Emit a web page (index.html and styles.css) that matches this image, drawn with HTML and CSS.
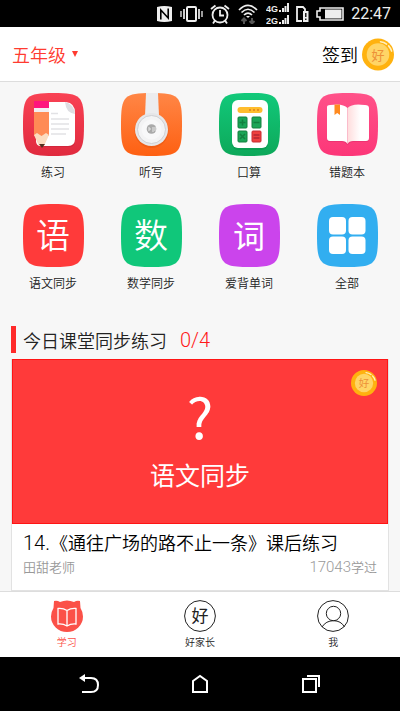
FILE: index.html
```html
<!DOCTYPE html>
<html lang="zh-CN">
<head>
    <meta charset="UTF-8">
    <meta name="viewport" content="width=device-width, initial-scale=1.0">
    <title>学习</title>
    <link rel="stylesheet" href="styles.css">
</head>
<body>
    <svg width="0" height="0" class="defs" aria-hidden="true">
        <defs>
            <linearGradient id="red" x1="0" y1="0" x2="0" y2="1"><stop offset="0" stop-color="#f94254"/><stop offset="1" stop-color="#e02a3e"/></linearGradient>
            <linearGradient id="orange" x1="0" y1="0" x2="0" y2="1"><stop offset="0" stop-color="#ff8646"/><stop offset="1" stop-color="#fe6012"/></linearGradient>
            <linearGradient id="green" x1="0" y1="0" x2="0" y2="1"><stop offset="0" stop-color="#12c97a"/><stop offset="1" stop-color="#0da85a"/></linearGradient>
            <linearGradient id="pink" x1="0" y1="0" x2="0" y2="1"><stop offset="0" stop-color="#ff5289"/><stop offset="1" stop-color="#fc3678"/></linearGradient>
            <linearGradient id="page" x1="0" y1="0" x2="1" y2="0"><stop offset="0" stop-color="#ffdcdc"/><stop offset="0.6" stop-color="#fff"/></linearGradient>
            <path id="tile" d="M0 31.5C0 3 3 0 30.5 0S61 3 61 31.5S58 63 30.5 63S0 60 0 31.5Z"/>
            <symbol id="coin" viewBox="0 0 32 32">
                <circle cx="16" cy="16" r="16" fill="#ffb20f"/>
                <circle cx="16" cy="16" r="11.3" fill="#ffd566"/>
                <path d="M18.5 3.2Q22 3.6 24.6 5.6M26.6 7.4Q28.6 9.6 29.6 12.6" fill="none" stroke="#fff0c0" stroke-width="1.6" stroke-linecap="round"/>
                <text x="16" y="21" text-anchor="middle" class="coin-text">好</text>
            </symbol>
        </defs>
    </svg>

    <div class="status-bar">
        <svg width="17" height="18" viewBox="0 0 17 18">
            <path d="M1 2Q8 0 16 2V16Q8 18 1 16Z" fill="#eee"/>
            <path d="M4.800 14.500V5L12.200 13V3.500" fill="none" stroke="#000" stroke-width="1.600"/>
        </svg>
        <svg width="23" height="18" viewBox="0 0 23 18" fill="none" stroke="#eee">
            <rect x="7" y="2" width="9" height="14" rx="1" stroke-width="2"/>
            <path d="M4 4V14M19 4V14" stroke-width="1.700"/>
            <path d="M1 6V12M22 6V12" stroke-width="1.300"/>
        </svg>
        <svg width="20" height="20" viewBox="0 0 20 20" fill="none" stroke="#eee" stroke-width="1.800">
            <circle cx="10" cy="11" r="7.500"/>
            <path d="M10 6V11.500H14M1 5L5.500 1.500M19 5L14.500 1.500M5 16.500L3 19.500M15 16.500L17 19.500"/>
        </svg>
        <svg width="22" height="20" viewBox="0 0 22 20" fill="none" stroke="#eee" stroke-width="1.700">
            <path d="M2 6Q11 -3 20 6M4.500 8.500Q11 2 17.500 8.500M7 11Q11 7 15 11"/>
            <path d="M9 12H13L11 14Z" fill="#eee" stroke="none"/>
            <path d="M7 20V14.500M4.500 17L7 14.500L9.500 17M15 14V19.500M12.500 17L15 19.500L17.500 17" stroke="#555" stroke-width="2"/>
        </svg>
        <svg width="23" height="22" viewBox="0 0 23 22" fill="#eee">
            <text x="0" y="9" class="signal-text">4G</text>
            <text x="0" y="21" class="signal-text">2G</text>
            <path d="M13 7h2v2h-2zM16 5h2v4h-2zM18.500 3h2v6h-2zM21 0h2v9h-2zM13 19h2v2h-2zM16 17h2v4h-2zM18.500 15h2v6h-2zM21 12h2v9h-2z"/>
        </svg>
        <svg width="13" height="18" viewBox="0 0 13 18">
            <path d="M6 16H1V2H7L9 4V6" fill="none" stroke="#eee" stroke-width="1.800"/>
            <path d="M7 6H12.500V17H7Z" fill="#eee"/>
            <path d="M9.800 8V12M9.800 13.500V15" stroke="#000" stroke-width="1.300"/>
        </svg>
        <svg width="28" height="14" viewBox="0 0 28 14">
            <path d="M4 1H27V13H4V10H1V4H4Z" fill="none" stroke="#eee" stroke-width="1.600"/>
            <path d="M9 2.500H25.500V11.500H9Z" fill="#eee"/>
        </svg>
        <span class="clock">22:47</span>
    </div>

    <header class="header">
        <button class="grade">五年级
            <svg width="6" height="6" viewBox="0 0 6 6"><path d="M0 0H6L3 6Z" fill="#ff3b30"/></svg>
        </button>
        <button class="sign">签到
            <svg width="32" height="33"><use href="#coin"/></svg>
        </button>
    </header>

    <main class="main">
        <nav class="grid">
            <a href="#" class="item">
                <svg width="61" height="63" viewBox="0 0 61 63">
                    <use href="#tile" fill="url(#red)"/>
                    <path d="M15 12H46Q52 13 52 19V48Q52 54 46 54H19L15 50Z" fill="#b91d35" opacity="0.4"/>
                    <path d="M13 9H43Q52 10 52 20V46Q52 53 45 53H18Q13 53 13 48Z" fill="#fff"/>
                    <path d="M42 9Q43 20 52 21Q51 11 42 9Z" fill="#dedee2"/>
                    <path d="M28 20.500H35M28 26H46M28 31H46M28 36H46M28 41H43" stroke="#e2e2e5" stroke-width="1.500"/>
                    <path d="M11 8H26V15H11Z" fill="#ff147d"/>
                    <path d="M11 15H26V19H11Z" fill="#f2eef2"/>
                    <path d="M11 19H26V43H11Z" fill="#ff8b55"/>
                    <path d="M11 42L14 40L18.500 43L23 40L26 42L21 53H16Z" fill="#fbdcc0"/>
                    <path d="M16 51H22L19 55Z" fill="#553020"/>
                </svg>
                <span>练习</span>
            </a>
            <a href="#" class="item">
                <svg width="61" height="63" viewBox="0 0 61 63">
                    <use href="#tile" fill="url(#orange)"/>
                    <circle cx="30.500" cy="38" r="17" fill="#d94c0a" opacity="0.35"/>
                    <path d="M25 0H37L38 23H24Z" fill="#ececee"/>
                    <circle cx="30.500" cy="36.500" r="16.500" fill="#e6e6e8"/>
                    <circle cx="30.500" cy="36.500" r="14" fill="#f3f3f4" stroke="#cfcfd2"/>
                    <circle cx="30.500" cy="36.500" r="10" fill="#f8f8f9"/>
                    <circle cx="30.500" cy="36" r="4.800" fill="#aaa"/>
                    <path d="M28 34V38M28 36H30M32 34V39M34 34V38" stroke="#e8e8e8"/>
                </svg>
                <span>听写</span>
            </a>
            <a href="#" class="item">
                <svg width="61" height="63" viewBox="0 0 61 63">
                    <use href="#tile" fill="url(#green)"/>
                    <rect x="13" y="9" width="36" height="48" rx="6" fill="#078c45" opacity="0.4"/>
                    <rect x="13" y="7" width="36" height="48" rx="6" fill="#fff"/>
                    <rect x="18.500" y="14" width="25" height="6" rx="3" fill="#ffbd2e"/>
                    <path d="M30 17h2M34 17h2M38 17h2" stroke="#e88d20" stroke-width="2"/>
                    <g stroke="#12803f">
                        <rect x="19" y="24" width="9" height="11" rx="1" fill="#1ba557"/>
                        <rect x="33" y="24" width="9" height="11" rx="1" fill="#1ba557"/>
                        <rect x="19" y="38" width="9" height="11" rx="1" fill="#1ba557"/>
                        <path d="M20.500 29.500H26.500M23.500 26.500V32.500M34.500 29.500H40.500M21 41L26 46M26 41L21 46" stroke-width="1.600"/>
                    </g>
                    <rect x="33" y="38" width="9" height="11" rx="1" fill="#ee403e" stroke="#c62b30"/>
                    <path d="M34.500 42H40.500M34.500 45H40.500" stroke="#b32630" stroke-width="1.400"/>
                </svg>
                <span>口算</span>
            </a>
            <a href="#" class="item">
                <svg width="61" height="63" viewBox="0 0 61 63">
                    <use href="#tile" fill="url(#pink)"/>
                    <path d="M10 15Q10 13 13 12Q25 10 30.500 15Q36 10 49 12Q52 13 52 15V47Q52 49 49 49H36Q33 49 30.500 52Q28 49 25 49H13Q10 49 10 47Z" fill="#c91f5c" opacity="0.3"/>
                    <path d="M10 14Q10 12 13 12Q26 10 30.500 15V51Q29 48 25 48H13Q10 48 10 45Z" fill="#fff"/>
                    <path d="M30.500 15Q35 10 48 12Q52 12 52 15V45Q52 48 49 48H36Q32 48 30.500 51Z" fill="url(#page)"/>
                    <path d="M17.500 11.500H23V22L20.200 20L17.500 22Z" fill="#ff8a1f"/>
                </svg>
                <span>错题本</span>
            </a>
            <a href="#" class="item">
                <svg width="61" height="63" viewBox="0 0 61 63">
                    <use href="#tile" fill="#ff3a3a"/>
                    <text x="30" y="44" text-anchor="middle" class="tile-text">语</text>
                </svg>
                <span>语文同步</span>
            </a>
            <a href="#" class="item">
                <svg width="61" height="63" viewBox="0 0 61 63">
                    <use href="#tile" fill="#10c77a"/>
                    <text x="30" y="44" text-anchor="middle" class="tile-text">数</text>
                </svg>
                <span>数学同步</span>
            </a>
            <a href="#" class="item">
                <svg width="61" height="63" viewBox="0 0 61 63">
                    <use href="#tile" fill="#cb44ec"/>
                    <text x="30" y="44" text-anchor="middle" class="tile-text word">词</text>
                </svg>
                <span>爱背单词</span>
            </a>
            <a href="#" class="item">
                <svg width="61" height="63" viewBox="0 0 61 63">
                    <use href="#tile" fill="#32aef0"/>
                    <g fill="#fff">
                        <rect x="12" y="13" width="17" height="17.500" rx="4"/>
                        <rect x="31.500" y="13" width="17" height="17.500" rx="4"/>
                        <rect x="12" y="32.500" width="17" height="17.500" rx="4"/>
                        <rect x="31.500" y="32.500" width="17" height="17.500" rx="4"/>
                    </g>
                </svg>
                <span>全部</span>
            </a>
        </nav>

        <h2 class="section-title">今日课堂同步练习 <span class="count">0/4</span></h2>

        <a href="#" class="card">
            <div class="cover">
                <svg class="badge" width="26" height="26"><use href="#coin"/></svg>
                <span class="mark">?</span>
                <span class="subject">语文同步</span>
            </div>
            <div class="card-body">
                <h3><span class="title-num">14.</span>《通往广场的路不止一条》课后练习</h3>
                <p class="meta"><span>田甜老师</span><span><span class="meta-num">17043</span>学过</span></p>
            </div>
        </a>
    </main>

    <nav class="tab-bar">
        <a href="#" class="tab active">
            <svg width="32" height="32" viewBox="0 0 32 32">
                <path d="M3 1Q6 0 9 2Q16 -1 23 2Q26 0 29 1L29.500 8Q32 12 32 16.500A16 15.500 0 0 1 0 16.500Q0 12 2.500 8Z" fill="#fb5148"/>
                <path d="M16 10.500Q12 8 7 8.500V24Q12 23.500 16 26Q20 23.500 25 24V8.500Q20 8 16 10.500V26" fill="none" stroke="#fff" stroke-width="1.300"/>
            </svg>
            <span>学习</span>
        </a>
        <a href="#" class="tab">
            <svg width="32" height="32" viewBox="0 0 32 32">
                <circle cx="16" cy="16" r="15.400" fill="none" stroke="#222"/>
                <text x="16" y="22" text-anchor="middle" class="tab-text">好</text>
            </svg>
            <span>好家长</span>
        </a>
        <a href="#" class="tab">
            <svg width="32" height="32" viewBox="0 0 32 32" fill="none" stroke="#222">
                <circle cx="16" cy="16" r="15.400"/>
                <circle cx="16.500" cy="13.500" r="7.200"/>
                <path d="M5 27Q9 20.700 16.500 20.700T27.500 27"/>
            </svg>
            <span>我</span>
        </a>
    </nav>

    <div class="system-nav">
        <button aria-label="返回">
            <svg width="20" height="20" viewBox="0 0 20 20" fill="none" stroke="#fff" stroke-width="2">
                <path d="M4 4H12Q19 4 19 11T12 18H3"/>
                <path d="M0 4L6 0V8Z" fill="#fff" stroke="none"/>
            </svg>
        </button>
        <button aria-label="主页">
            <svg width="18" height="20" viewBox="0 0 18 20" fill="none" stroke="#fff" stroke-width="2">
                <path d="M2 7L9 2L16 7V18H2Z"/>
            </svg>
        </button>
        <button aria-label="最近任务">
            <svg width="20" height="20" viewBox="0 0 20 20" fill="none" stroke="#fff" stroke-width="2">
                <path d="M2 5H15V18H2ZM6 2H18V13"/>
            </svg>
        </button>
    </div>
</body>
</html>
```

FILE: styles.css
```css
* {
    margin: 0;
    padding: 0;
    box-sizing: border-box;
}

body {
    display: flex;
    flex-direction: column;
    min-height: 100vh;
    background: #f7f7f7;
    color: #222;
    font-family: 'Noto Sans CJK SC', sans-serif;
    font-weight: 350;
}

a {
    color: inherit;
    text-decoration: none;
}

button {
    border: none;
    background: none;
    font: inherit;
    color: inherit;
    cursor: pointer;
}

svg {
    display: block;
    flex-shrink: 0;
}

.defs {
    position: absolute;
}

.status-bar {
    display: flex;
    align-items: center;
    justify-content: flex-end;
    gap: 7px;
    height: 27px;
    padding-right: 9px;
    background: #000;
    color: #eee;
}

.clock {
    font: 16px Roboto, sans-serif;
}

.signal-text {
    font: bold 9px 'Liberation Sans', sans-serif;
}

.header {
    display: flex;
    align-items: center;
    justify-content: space-between;
    height: 55px;
    padding: 0 6px 0 12px;
    background: #fff;
    border-bottom: 1px solid #ddd;
    font-size: 18px;
}

.grade, .sign {
    display: flex;
    align-items: center;
    gap: 6px;
}

.grade {
    color: #ff3b30;
}

.sign {
    gap: 4px;
    color: #000;
}

.coin-text {
    font-size: 13px;
    font-weight: 400;
    fill: #ee9038;
}

.main {
    flex: 1;
    padding: 11px 11px 0;
}

.grid {
    display: grid;
    grid-template-columns: repeat(4, 1fr);
    row-gap: 22px;
    margin: 0 -7px;
}

.item {
    display: flex;
    flex-direction: column;
    align-items: center;
    gap: 6px;
    font-size: 12px;
    line-height: 20px;
}

.tile-text {
    font-size: 34px;
    fill: #fff;
}

.tile-text.word {
    font-size: 32px;
    font-weight: 400;
}

.section-title {
    display: flex;
    align-items: center;
    height: 27px;
    margin: 33px 0 6px;
    padding-left: 7px;
    border-left: 5px solid #ff2a2a;
    font-size: 18px;
    line-height: 24px;
    font-weight: 350;
}

.count {
    margin-left: 13px;
    color: #ff1a1a;
    font: 300 20px Roboto, sans-serif;
}

.card {
    display: block;
    background: #fff;
    border: 1px solid #e2e2e2;
    border-top: none;
}

.cover {
    position: relative;
    display: flex;
    flex-direction: column;
    align-items: center;
    height: 165px;
    padding-top: 23px;
    background: #ff3a3a;
    border: 1px solid #ff1414;
    color: #fff;
}

.badge {
    position: absolute;
    top: 10px;
    right: 10px;
}

.mark {
    font-size: 56px;
    line-height: 64px;
    font-weight: 400;
}

.subject {
    margin-top: 9px;
    font-size: 25px;
    line-height: 36px;
    font-weight: 400;
}

.card-body {
    padding: 4px 11px 13px;
}

.card-body h3 {
    font-size: 18px;
    line-height: 28px;
    font-weight: 350;
    color: #000;
}

.title-num {
    font-family: Roboto, sans-serif;
    font-size: 20px;
    font-weight: 300;
}

.meta {
    display: flex;
    justify-content: space-between;
    font-size: 13px;
    line-height: 20px;
    color: #999;
}

.meta-num {
    font-family: Roboto, sans-serif;
    font-size: 15px;
}

.tab-bar {
    display: grid;
    grid-template-columns: repeat(3, 1fr);
    height: 66px;
    padding: 8px 0;
    background: #fff;
    border-top: 1px solid #ddd;
}

.tab {
    display: flex;
    flex-direction: column;
    align-items: center;
    gap: 2px;
    font-size: 10px;
    line-height: 16px;
}

.tab.active {
    color: #fb5148;
}

.tab-text {
    font-size: 17px;
    font-weight: 400;
    fill: #222;
}

.system-nav {
    display: flex;
    align-items: center;
    justify-content: space-between;
    height: 54px;
    padding: 0 79px;
    background: #000;
}
```
